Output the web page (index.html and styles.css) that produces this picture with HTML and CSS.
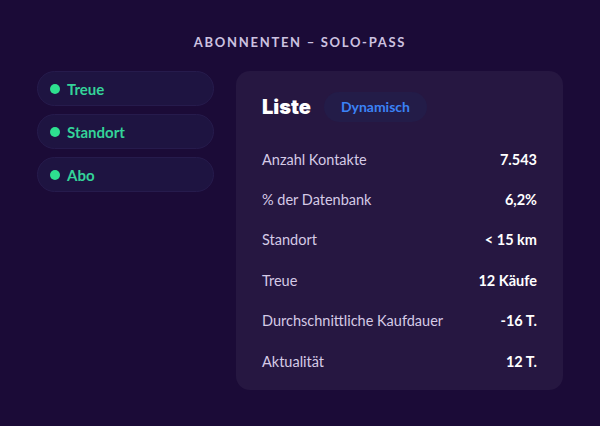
FILE: index.html
```html
<!DOCTYPE html>
<html lang="de">
<head>
    <meta charset="UTF-8">
    <meta name="viewport" content="width=device-width, initial-scale=1.0">
    <title>Abonnenten – Solo-Pass</title>
    <link rel="stylesheet" href="styles.css">
</head>
<body>
    <main>
        <h1 class="titel">Abonnenten – Solo-Pass</h1>
        <div class="inhalt">
            <ul class="filter">
                <li class="filter-pill"><span class="punkt"></span>Treue</li>
                <li class="filter-pill"><span class="punkt"></span>Standort</li>
                <li class="filter-pill"><span class="punkt"></span>Abo</li>
            </ul>
            <section class="karte">
                <div class="karte-kopf">
                    <h2>Liste</h2>
                    <span class="badge">Dynamisch</span>
                </div>
                <div class="zeile"><span>Anzahl Kontakte</span><b>7.543</b></div>
                <div class="zeile"><span>% der Datenbank</span><b>6,2%</b></div>
                <div class="zeile"><span>Standort</span><b>&lt; 15 km</b></div>
                <div class="zeile"><span>Treue</span><b>12 Käufe</b></div>
                <div class="zeile"><span>Durchschnittliche Kaufdauer</span><b>-16 T.</b></div>
                <div class="zeile"><span>Aktualität</span><b>12 T.</b></div>
            </section>
        </div>
    </main>
</body>
</html>
```

FILE: styles.css
```css
body {
    margin: 0;
    background: #1b0b37;
    font-family: Lato, "Open Sans", sans-serif;
    color: #ffffff;
}

main {
    width: 600px;
    height: 426px;
    box-sizing: border-box;
    padding-top: 33px;
}

.titel {
    margin: 0;
    text-align: center;
    font-size: 13px;
    font-weight: 700;
    letter-spacing: 1.7px;
    text-transform: uppercase;
    color: #cdc2e0;
    line-height: 18px;
}

.inhalt {
    display: flex;
    gap: 22px;
    padding: 20px 37px 0 37px;
}

.filter {
    list-style: none;
    margin: 0;
    padding: 0;
    width: 177px;
    display: flex;
    flex-direction: column;
    gap: 8px;
}

.filter-pill {
    height: 35px;
    box-sizing: border-box;
    border: 1px solid #261b4c;
    border-radius: 18px;
    background: #1e1441;
    display: flex;
    align-items: center;
    gap: 7px;
    padding-left: 12px;
    color: #34d399;
    font-size: 15px;
    font-weight: 700;
}

.punkt {
    width: 10px;
    height: 10px;
    border-radius: 50%;
    background: #2ee08f;
}

.karte {
    width: 327px;
    height: 319px;
    box-sizing: border-box;
    background: #261741;
    border-radius: 14px;
    padding: 21px 26px 0 26px;
}

.karte-kopf {
    display: flex;
    align-items: center;
    gap: 13px;
    margin-bottom: 17px;
}

.karte-kopf h2 {
    margin: 0;
    font-family: Inter, sans-serif;
    font-size: 20px;
    font-weight: 900;
}

.badge {
    background: #231c48;
    color: #3b82f6;
    font-size: 14px;
    font-weight: 700;
    line-height: 30px;
    padding: 0 17px;
    border-radius: 15px;
}

.zeile {
    display: flex;
    justify-content: space-between;
    align-items: center;
    height: 40.4px;
    font-size: 14.5px;
}

.zeile span {
    color: #d5cae6;
}

.zeile b {
    font-weight: 700;
}
```
